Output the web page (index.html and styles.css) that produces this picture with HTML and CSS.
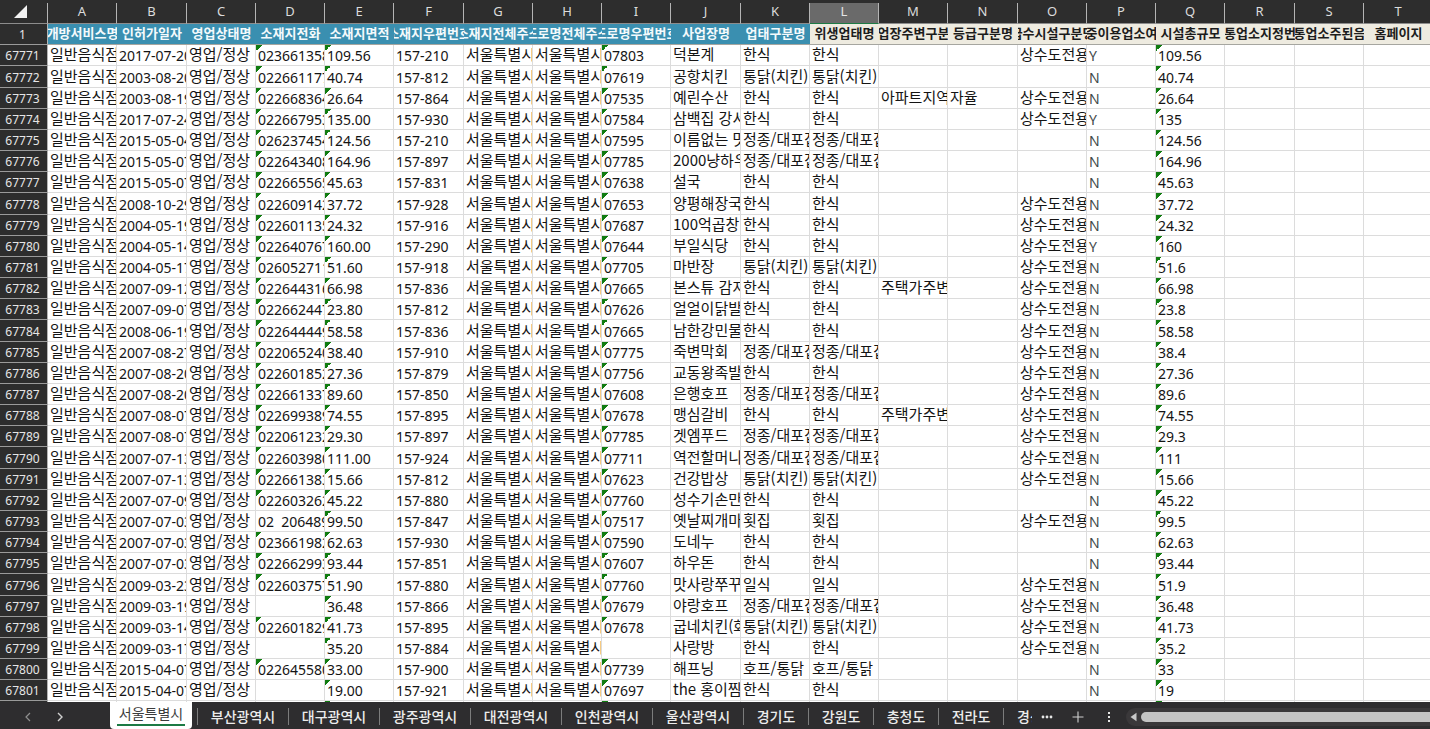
FILE: index.html
```html
<!DOCTYPE html>
<html lang="ko">
<head>
<meta charset="utf-8">
<title>일반음식점</title>
<link rel="stylesheet" href="styles.css">
</head>
<body>
<main class="sheet">
  <table class="grid">
    <colgroup>
      <col class="col-index">
      <col><col class="col-wide"><col><col>
      <col><col class="col-wide"><col><col>
      <col><col class="col-wide"><col><col>
      <col><col class="col-wide"><col><col>
      <col><col class="col-wide"><col><col>
    </colgroup>
    <thead>
      <tr class="letters">
        <th class="corner"><svg width="13" height="13" viewBox="0 0 13 13" aria-hidden="true"><path d="M13 0V13H0Z" fill="#f2f2f2"/></svg></th>
        <th>A</th><th>B</th><th>C</th><th>D</th><th>E</th><th>F</th><th>G</th><th>H</th><th>I</th><th>J</th><th>K</th><th class="selected">L</th><th>M</th><th>N</th><th>O</th><th>P</th><th>Q</th><th>R</th><th>S</th><th>T</th>
      </tr>
      <tr class="titles">
        <th class="index">1</th>
        <th class="blue"><div>개방서비스명</div></th>
        <th class="blue"><div>인허가일자</div></th>
        <th class="blue"><div>영업상태명</div></th>
        <th class="blue"><div>소재지전화</div></th>
        <th class="blue"><div>소재지면적</div></th>
        <th class="blue"><div>소재지우편번호</div></th>
        <th class="blue"><div>소재지전체주소</div></th>
        <th class="blue"><div>도로명전체주소</div></th>
        <th class="blue"><div>도로명우편번호</div></th>
        <th class="blue"><div>사업장명</div></th>
        <th class="blue"><div>업태구분명</div></th>
        <th class="cream"><div>위생업태명</div></th>
        <th class="cream"><div>영업장주변구분명</div></th>
        <th class="cream"><div>등급구분명</div></th>
        <th class="cream"><div>급수시설구분명</div></th>
        <th class="cream"><div>다중이용업소여부</div></th>
        <th class="cream"><div>시설총규모</div></th>
        <th class="cream"><div>전통업소지정번호</div></th>
        <th class="cream"><div>전통업소주된음식</div></th>
        <th class="cream"><div>홈페이지</div></th>
      </tr>
    </thead>
    <tbody id="rows"></tbody>
  </table>
</main>
<footer class="bar">
  <div class="nav">
    <button type="button" class="icon" aria-label="이전 시트"><svg width="8" height="10" viewBox="0 0 8 10"><path d="M6 1 2 5l4 4" fill="none" stroke="#8f8f8f" stroke-width="1.2"/></svg></button>
    <button type="button" class="icon" aria-label="다음 시트"><svg width="8" height="10" viewBox="0 0 8 10"><path d="M2 1l4 4-4 4" fill="none" stroke="#d0d0d0" stroke-width="1.4"/></svg></button>
  </div>
  <button type="button" class="tab active"><span>서울특별시</span></button>
  <div class="tabs">
    <button type="button" class="tab">부산광역시</button>
    <button type="button" class="tab">대구광역시</button>
    <button type="button" class="tab">광주광역시</button>
    <button type="button" class="tab">대전광역시</button>
    <button type="button" class="tab">인천광역시</button>
    <button type="button" class="tab">울산광역시</button>
    <button type="button" class="tab short">경기도</button>
    <button type="button" class="tab short">강원도</button>
    <button type="button" class="tab short">충청도</button>
    <button type="button" class="tab short">전라도</button>
    <button type="button" class="tab cut">경상도</button>
  </div>
  <button type="button" class="icon more" aria-label="시트 더 보기"><svg width="12" height="4" viewBox="0 0 12 4" fill="#e6e6e6"><circle cx="2" cy="2" r="1.4"/><circle cx="6" cy="2" r="1.4"/><circle cx="10" cy="2" r="1.4"/></svg></button>
  <button type="button" class="icon add" aria-label="새 시트"><svg width="12" height="12" viewBox="0 0 12 12"><path d="M6 .5v11M.5 6h11" stroke="#d0d0d0" stroke-width="1.1"/></svg></button>
  <button type="button" class="icon grip" aria-label="탭 너비 조절"><svg width="4" height="12" viewBox="0 0 4 12" fill="#e6e6e6"><rect x="1" y="1" width="2" height="2"/><rect x="1" y="5" width="2" height="2"/><rect x="1" y="9" width="2" height="2"/></svg></button>
  <div class="scroll">
    <svg width="7" height="10" viewBox="0 0 7 10" aria-hidden="true"><path d="M6.500 .8V9.200L.5 5Z" fill="#c8c8c8"/></svg>
    <div class="thumb"></div>
  </div>
</footer>
<script src="rows.js"></script>
</body>
</html>
```
FILE: styles.css
```css
* {
  box-sizing: border-box;
}

body {
  margin: 0;
  height: 100vh;
  display: flex;
  flex-direction: column;
  overflow: hidden;
  background: #ffffff;
  color: #141414;
  font-family: "Noto Sans", "Noto Sans CJK KR", sans-serif;
}

.sheet {
  flex: 1;
  min-height: 0;
  overflow: hidden;
  padding-top: 3px;
  background: #2d2d2d;
}

.grid {
  width: 100%;
  table-layout: fixed;
  border-collapse: separate;
  border-spacing: 0;
  background: #ffffff;
}

.grid col {
  width: 69px;
}

.grid .col-wide {
  width: 70px;
}

.grid .col-index {
  width: 48px;
}

.grid th,
.grid td {
  padding: 0;
  height: 21px;
  line-height: 18px;
  white-space: pre;
  overflow: hidden;
}

.grid .tall > * {
  height: 22px;
}

.grid .letters th {
  background: #2d2d2d;
  color: #dcdcdc;
  border-right: 1px solid #b4b4b4;
  border-bottom: 1px solid #8c8c8c;
  padding-bottom: 3px;
  font-size: 13px;
  font-weight: 400;
  line-height: 17px;
}

.grid .letters .corner {
  padding-right: 20px;
}

.corner svg {
  display: block;
  margin-left: auto;
}

.grid .letters .selected {
  background: #6a6a6a;
  color: #e6e6e6;
  border-bottom-color: #1c7a44;
}

.grid .index {
  background: #2d2d2d;
  color: #e6e6e6;
  border-right: 1px solid #b4b4b4;
  border-bottom: 1px solid #9a9a9a;
  padding: 2px 2px 0 0;
  font-size: 12px;
  font-weight: 400;
  text-align: center;
}

.titles .blue,
.titles .cream {
  border-bottom: 1px solid #a6a6a0;
  font-family: "Noto Sans CJK KR", sans-serif;
  font-size: 13px;
  font-weight: 700;
}

.titles div {
  display: flex;
  justify-content: center;
  height: 20px;
  overflow: hidden;
}

.titles .blue {
  background: #3a8fb0;
  color: #f4fafc;
}

.titles .cream {
  background: #eeebe0;
  color: #1c1c1c;
}

.grid td {
  border-right: 1px solid #dcdcdc;
  border-bottom: 1px solid #dcdcdc;
  padding: 2px 0 0 2px;
  font-size: 14px;
}

.grid .hangul {
  padding: 0 0 2px 2px;
  font-family: "Noto Sans CJK KR", sans-serif;
  font-size: 15px;
}

.grid .flag {
  background: linear-gradient(135deg, #107c10 50%, transparent 50%) 0 0 / 6px 6px no-repeat;
}

.grid .yn {
  color: #3f4a4a;
}

.bar {
  flex: none;
  display: flex;
  height: 27px;
  background: #2e2d2f;
}

.bar button {
  border: 0;
  padding: 0;
  background: none;
  color: #ececec;
  font-family: "Noto Sans CJK KR", sans-serif;
  font-size: 14px;
  font-weight: 500;
  white-space: nowrap;
}

.bar svg {
  display: block;
}

.nav {
  display: flex;
  gap: 24px;
  width: 110px;
  padding: 3px 0 0 24px;
}

.bar .active {
  flex: none;
  width: 82px;
  margin-right: 5px;
  padding: 0 7px 3px;
  background: #ffffff;
  color: #3c3c3c;
  font-weight: 400;
  border-radius: 0 0 4px 4px;
}

.active span {
  display: block;
  height: 24px;
  line-height: 23px;
  border-bottom: 2px solid #1c7a44;
}

.tabs {
  display: flex;
  align-items: center;
  padding-top: 2px;
}

.tabs .tab {
  width: 91px;
  height: 17px;
  line-height: 15px;
  border-left: 1px solid #7c7c7c;
}

.tabs .short {
  width: 65px;
}

.tabs .cut {
  width: 29px;
  padding-left: 13px;
  overflow: hidden;
  text-align: left;
}

.icon {
  display: flex;
  align-items: center;
}

.bar .more,
.bar .add,
.bar .grip {
  padding-top: 3px;
}

.more {
  margin-left: 9px;
}

.add {
  margin-left: 19px;
}

.grip {
  margin-left: 23px;
}

.scroll {
  flex: 1;
  display: flex;
  align-items: center;
  gap: 4px;
  height: 18px;
  margin: 6px 0 0 15px;
  padding-left: 4px;
  border-radius: 9px 0 0 9px;
  background: #3a383a;
}

.thumb {
  flex: 1;
  height: 10px;
  border-radius: 5px 0 0 5px;
  background: #c4c4c4;
}
```
FILE: rows.js
```js
const FIRST_ROW = 67771;
const WATER = "상수도전용";

// 인허가일자, 전화, 면적, 우편번호, 도로명우편번호, 사업장명, 업태, 주변구분, 등급구분, 급수시설, 다중이용
const data = [
  ["2017-07-20", "023661358", 109.56, "157-210", "07803", "덕본계", "한식", "", "", WATER, "Y"],
  ["2003-08-20", "022661177", 40.74, "157-812", "07619", "공항치킨", "통닭(치킨)", "", "", "", "N"],
  ["2003-08-19", "022668364", 26.64, "157-864", "07535", "예린수산", "한식", "아파트지역", "자율", WATER, "N"],
  ["2017-07-24", "022667953", 135, "157-930", "07584", "삼백집 강서", "한식", "", "", WATER, "Y"],
  ["2015-05-04", "026237454", 124.56, "157-210", "07595", "이름없는 맛", "정종/대포집", "", "", "", "N"],
  ["2015-05-07", "022643408", 164.96, "157-897", "07785", "2000냥하우", "정종/대포집", "", "", "", "N"],
  ["2015-05-07", "022665565", 45.63, "157-831", "07638", "설국", "한식", "", "", "", "N"],
  ["2008-10-29", "022609142", 37.72, "157-928", "07653", "양평해장국", "한식", "", "", WATER, "N"],
  ["2004-05-19", "022601135", 24.32, "157-916", "07687", "100억곱창", "한식", "", "", WATER, "N"],
  ["2004-05-14", "022640767", 160, "157-290", "07644", "부일식당", "한식", "", "", WATER, "Y"],
  ["2004-05-17", "026052711", 51.6, "157-918", "07705", "마반장", "통닭(치킨)", "", "", WATER, "N"],
  ["2007-09-12", "022644316", 66.98, "157-836", "07665", "본스튜 감자", "한식", "주택가주변", "", WATER, "N"],
  ["2007-09-07", "022662447", 23.8, "157-812", "07626", "얼얼이닭발", "한식", "", "", WATER, "N"],
  ["2008-06-19", "022644449", 58.58, "157-836", "07665", "남한강민물", "한식", "", "", WATER, "N"],
  ["2007-08-27", "022065240", 38.4, "157-910", "07775", "죽변막회", "정종/대포집", "", "", WATER, "N"],
  ["2007-08-20", "022601852", 27.36, "157-879", "07756", "교동왕족발", "한식", "", "", WATER, "N"],
  ["2007-08-20", "022661337", 89.6, "157-850", "07608", "은행호프", "정종/대포집", "", "", WATER, "N"],
  ["2007-08-07", "022699389", 74.55, "157-895", "07678", "맹심갈비", "한식", "주택가주변", "", WATER, "N"],
  ["2007-08-07", "022061232", 29.3, "157-897", "07785", "겟엠푸드", "정종/대포집", "", "", WATER, "N"],
  ["2007-07-13", "022603980", 111, "157-924", "07711", "역전할머니", "정종/대포집", "", "", WATER, "N"],
  ["2007-07-13", "022661383", 15.66, "157-812", "07623", "건강밥상", "통닭(치킨)", "", "", WATER, "N"],
  ["2007-07-09", "022603262", 45.22, "157-880", "07760", "성수기손만", "한식", "", "", "", "N"],
  ["2007-07-03", "02  206489", 99.5, "157-847", "07517", "옛날찌개마", "횟집", "", "", WATER, "N"],
  ["2007-07-03", "023661982", 62.63, "157-930", "07590", "도네누", "한식", "", "", "", "N"],
  ["2007-07-03", "022662993", 93.44, "157-851", "07607", "하우돈", "한식", "", "", "", "N"],
  ["2009-03-23", "022603757", 51.9, "157-880", "07760", "맛사랑쭈꾸", "일식", "", "", WATER, "N"],
  ["2009-03-19", "", 36.48, "157-866", "07679", "야랑호프", "정종/대포집", "", "", WATER, "N"],
  ["2009-03-14", "022601829", 41.73, "157-895", "07678", "굽네치킨(화", "통닭(치킨)", "", "", WATER, "N"],
  ["2009-03-17", "", 35.2, "157-884", "", "사랑방", "한식", "", "", WATER, "N"],
  ["2015-04-07", "022645580", 33, "157-900", "07739", "해프닝", "호프/통닭", "", "", "", "N"],
  ["2015-04-07", "", 19, "157-921", "07697", "the 홍이찜", "한식", "", "", "", "N"],
];

const body = document.getElementById("rows");

function addRow(label, cells, tall) {
  const row = body.insertRow();
  if (tall) row.className = "tall";
  const head = document.createElement("th");
  head.className = "index";
  head.scope = "row";
  head.textContent = label;
  row.append(head);
  for (const [text, kind] of cells) {
    const cell = row.insertCell();
    cell.textContent = text;
    if (kind) cell.className = kind;
  }
}

data.forEach((d, i) => {
  const [date, phone, area, zip, roadZip, name, type, near, grade, water, multi] = d;
  addRow(FIRST_ROW + i, [
    ["일반음식점", "hangul"],
    [date],
    ["영업/정상", "hangul"],
    [phone, /^\d+$/.test(phone) ? "flag" : ""],
    [area.toFixed(2), "flag"],
    [zip],
    ["서울특별시", "hangul"],
    ["서울특별시", "hangul"],
    [roadZip, roadZip ? "flag" : ""],
    [name, "hangul"],
    [type, "hangul"],
    [type, "hangul"],
    [near, "hangul"],
    [grade, "hangul"],
    [water, "hangul"],
    [multi, "yn"],
    [String(area), "flag"],
    [""], [""], [""],
  ], i % 6 === 1);
});

// The next row only peeks out above the tab bar.
addRow("", Array.from({ length: 20 }, (_, c) => ["", [4, 8, 16].includes(c) ? "flag" : ""]), false);
```
